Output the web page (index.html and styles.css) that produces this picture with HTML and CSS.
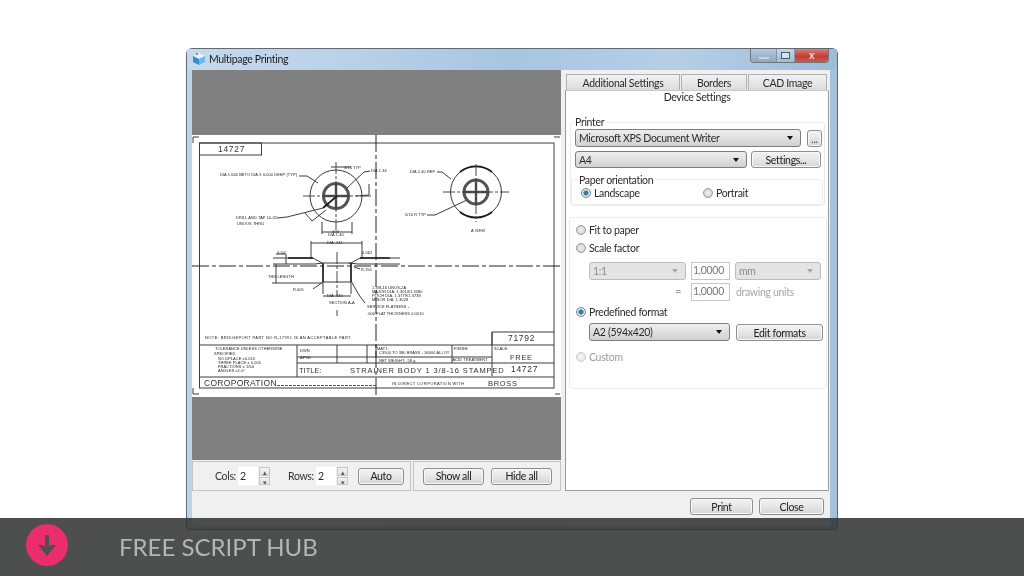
FILE: index.html
```html
<!DOCTYPE html>
<html lang="en">
<head>
<meta charset="utf-8">
<title>Multipage Printing</title>
<link rel="stylesheet" href="styles.css">
</head>
<body>
<main class="window">
  <header class="titlebar">
    <svg class="appicon" viewBox="0 0 14 14"><path d="M1 4l6-3 6 3-6 3z" fill="#e8f4fb"/><path d="M1 4l6 3v6l-6-3z" fill="#2f8fd0"/><path d="M13 4l-6 3v6l6-3z" fill="#6ab9e8"/><path d="M4 1.500l2 1" stroke="#1c5f95" stroke-width="1.200"/></svg>
    <span class="wintitle">Multipage Printing</span>
    <div class="winbtns">
      <span class="wb wb-min"><i></i></span>
      <span class="wb wb-max"><i></i></span>
      <span class="wb wb-close">x</span>
    </div>
  </header>
  <div class="client">
    <section class="leftcol">
      <div class="preview">
        <svg class="paper" viewBox="192 135 369 262">
          <g class="ln">
            <path d="M193 143v-6h6M554 137h6M193 388v6h6M555 394h5"/>
            <rect x="199.500" y="143" width="354.500" height="245"/>
            <rect x="199.500" y="143" width="62" height="12"/>
            <path d="M492 345v-13h62M199.500 345h354.500M199.500 377h354.500M297 345v32M297 357h195M297 363h257M492 332v44M452 345v18M337 345v18M367 345v18M376 345v12"/>
          </g>
          <path class="dash" d="M376 135v262M192 266h369"/>
          <g class="ln">
            <circle cx="336" cy="196" r="26"/>
            <circle class="ring" cx="336" cy="196" r="12.500"/>
            <path class="cross" d="M336 184v24M324 196h24"/>
            <path class="thin" d="M336 162v68M303 196h68"/>
            <path d="M299 176h8l11 7M370 171l-6 1l-17 16M331 167h20M369 184v11l-13 1"/>
            <path class="thick" d="M323 208l14-12"/>
            <path d="M277 218l10 -1l36 -9M305 213l7 8l14-11M322 222v12M352 222v12M322 232h30"/>
            <circle cx="476" cy="192" r="25.500"/>
            <path class="thick" d="M460 172a25.600 25.600 0 0 1 32 0M460 212a25.600 25.600 0 0 0 32 0"/>
            <circle class="ring" cx="476" cy="192" r="12"/>
            <path class="cross" d="M476 181v22M465 192h22"/>
            <path class="thin" d="M476 164v58M443 192h66"/>
            <path d="M437 172h5l9 7M427 215h8l32-15"/>
          </g>
          <g class="ln">
            <path d="M311 243h51M311 241v18M362 241v18M273 258h40l9 5M273 264h42l8 -1M400 258h-40l-9 5M400 264h-42l-9 -1"/>
            <path class="thick" d="M288 258h25M323 263v19M351 263v19M360 258h30"/>
            <path d="M323 263h28M323 282h28M276 264v19M272 283h50M286 254v10M276 254h10M323 282v12M351 282v12M323 296h28M351 281l8 14l6 8M323 282l-10 7M354 267l6 2"/>
            <path class="thin" d="M337 252v44M337 310v6"/>
          </g>
          <g class="tiny">
            <text x="220" y="176">DIA 1.640 BETO DIA X 0.000 DEEP (TYP)</text>
            <text x="236" y="219">DRILL AND TAP 10-32</text>
            <text x="237" y="225">UNOOS THRU</text>
            <text x="344" y="169">3/16 TYP</text>
            <text x="371" y="172">DIA 1.34</text>
            <text x="331" y="233">.000</text>
            <text x="328" y="236">DIA 1.40</text>
            <text x="410" y="173">DIA 2.40 REF</text>
            <text x="405" y="216">5/16 R TYP</text>
            <text x="471" y="232">A VIEW</text>
            <text x="327" y="244">DIA .241</text>
            <text x="277" y="254">4.50°</text>
            <text x="268" y="278">THD LENGTH</text>
            <text x="293" y="291">R.005</text>
            <text x="361" y="271">R.156</text>
            <text x="362" y="254">0.062</text>
            <text x="327" y="297">DIA .140</text>
            <text x="329" y="304">SECTION A-A</text>
            <text x="372" y="289">1.3/8-16 UNOS-2A</text>
            <text x="372" y="293">MAJOR DIA. 1.3014/1.3580</text>
            <text x="372" y="297">PITCH DIA. 1.3779/1.3738</text>
            <text x="372" y="301">MINOR DIA. 1.3028</text>
            <text x="367" y="308">SERVICE FLATNESS -</text>
            <text x="367" y="315">.000 FLAT THICKNESS 0.0010</text>
            <text x="205" y="338.500" class="wide">NOTE: BRIDGEPORT PART NO R-17991 IS AN ACCEPTABLE PART</text>
            <text x="215" y="350">TOLERANCE UNLESS OTHERWISE</text>
            <text x="214" y="355">SPECIFIED</text>
            <text x="218" y="360">NO DPLACE ±0.010</text>
            <text x="218" y="364">THREE PLACE ± 0.005</text>
            <text x="218" y="368">FRACTIONS ± 1/64</text>
            <text x="218" y="372">ANGLES ±1.0°</text>
            <text x="300" y="352">DWN</text>
            <text x="300" y="358.500">APVD</text>
            <text x="377" y="350">MAT'L:</text>
            <text x="379" y="354">C3500 TO 380 BRASS - 36000 ALLOY</text>
            <text x="379" y="362">NET WEIGHT: .58 g</text>
            <text x="454" y="350">FINISH:</text>
            <text x="452.500" y="360.500">ACID TREATMENT</text>
            <text x="494" y="350">SCALE:</text>
            <text x="392" y="385" class="wide">IN DIRECT CORPORATION WITH</text>
          </g>
          <g class="small">
            <text x="218" y="152" class="s8">14727</text>
            <text x="508" y="341" class="s8">71792</text>
            <text x="510" y="360" class="s6">FREE</text>
            <text x="511" y="371.500" class="s8">14727</text>
            <text x="488" y="385.500" class="s7">BROSS</text>
            <text x="299" y="373" class="s7 st">TITLE:</text>
            <text x="350" y="373" class="s7 sl">STRAINER BODY 1 3/8-16 STAMPED</text>
            <text x="204" y="386" class="s8 sc">COROPORATION</text>
          </g>
          <path class="thin-solid" d="M277 385.500h100"/>
        </svg>
      </div>
      <div class="controls">
        <div class="cpanel cp1">
          <label class="lbl lbl-cols">Cols:</label>
          <span class="num">2</span>
          <span class="spin"><i>▴</i><i>▾</i></span>
          <label class="lbl lbl-rows">Rows:</label>
          <span class="num">2</span>
          <span class="spin"><i>▴</i><i>▾</i></span>
          <button class="btn btn-auto">Auto</button>
        </div>
        <div class="cpanel cp2">
          <button class="btn btn-show">Show all</button>
          <button class="btn btn-show">Hide all</button>
        </div>
      </div>
    </section>
    <section class="rightcol">
      <nav class="tabs">
        <span class="tab tab-a">Additional Settings</span>
        <span class="tab tab-b">Borders</span>
        <span class="tab tab-c">CAD Image</span>
      </nav>
      <div class="panel">
        <div class="paneltitle">Device Settings</div>
        <div class="group printer">
          <div class="legend">Printer</div>
          <div class="row r1">
            <div class="combo w226">Microsoft XPS Document Writer</div>
            <button class="btn btn-dots">...</button>
          </div>
          <div class="row r2">
            <div class="combo w172">A4</div>
            <button class="btn btn-settings">Settings...</button>
          </div>
          <div class="group orient">
            <div class="legend lg2">Paper orientation</div>
            <div class="orow">
              <span class="radio on"></span><span class="rl rl-land">Landscape</span>
              <span class="radio"></span><span>Portrait</span>
            </div>
          </div>
        </div>
        <div class="group scale">
          <div class="rrow mt5"><span class="radio"></span><span>Fit to paper</span></div>
          <div class="rrow mt4"><span class="radio"></span><span>Scale factor</span></div>
          <div class="inrow mt7">
            <div class="combo dis w97">1:1</div>
            <div class="field">1,0000</div>
            <div class="combo dis w86">mm</div>
          </div>
          <div class="inrow mt3">
            <div class="eq">=</div>
            <div class="field">1,0000</div>
            <div class="du">drawing units</div>
          </div>
          <div class="rrow mt4"><span class="radio on"></span><span>Predefined format</span></div>
          <div class="inrow mt4">
            <div class="combo w141">A2 (594x420)</div>
            <button class="btn btn-edit">Edit formats</button>
          </div>
          <div class="rrow mt9 off"><span class="radio"></span><span>Custom</span></div>
        </div>
      </div>
      <footer class="foot">
        <button class="btn btn-print">Print</button>
        <button class="btn btn-close">Close</button>
      </footer>
    </section>
  </div>
</main>
<aside class="hub">
  <span class="hubicon">
    <svg viewBox="0 0 42 42"><path d="M21 11v16" fill="none" stroke="#4d4f50" stroke-width="4"/><path d="M12 21h5l4 4 4-4h5l-9 11z" fill="#4d4f50"/></svg>
  </span>
  <span class="hubtext">FREE SCRIPT HUB</span>
</aside>
</body>
</html>
```

FILE: styles.css
```css
* { box-sizing: border-box; }
html, body { margin: 0; height: 100%; }
body {
  width: 1024px;
  height: 576px;
  overflow: hidden;
  background: #fff;
  padding: 48px 0 0 186px;
  font-family: Lato, "Liberation Sans", sans-serif;
  font-size: 10.500px;
  color: #2b2b2b;
}

.window {
  width: 652px;
  height: 482px;
  border: 1px solid #5f6a72;
  border-radius: 6px 6px 3px 3px;
  background: linear-gradient(90deg, #bcd3e9 0, #a9c6e2 45%, #b3cde6 70%, #a5c2dd 100%);
  display: flex;
  flex-direction: column;
  filter: blur(0.4px);
  letter-spacing: -0.320px;
}

.titlebar { height: 21px; display: flex; align-items: flex-start; position: relative; background: linear-gradient(90deg, #c6d9ec 0, #b9d1e8 25%, #a7c5e1 50%, #b6cfe7 75%, #9dbcd8 100%); }
.appicon { width: 14px; height: 14px; margin: 3px 0 0 5px; }
.wintitle { margin: 3px 0 0 3px; line-height: 14px; color: #1c1c1c; }
.winbtns { margin-left: auto; margin-right: 8px; display: flex; height: 14px; border: 1px solid #6d7780; border-top: 0; border-radius: 0 0 4px 4px; overflow: hidden; }
.wb { display: flex; align-items: center; justify-content: center; height: 13px; }
.wb-min { width: 25px; background: linear-gradient(#b5c9dc, #8ea9c0); }
.wb-min i { width: 10px; height: 2px; margin-top: 5px; background: #c5d4e0; }
.wb-max { width: 19px; background: linear-gradient(#c4d5e5, #a4bcd2); border-left: 1px solid #8497a8; border-right: 1px solid #8497a8; }
.wb-max i { width: 9px; height: 7px; border: 1px solid #4b5a68; background: #d6e2ec; }
.wb-close { width: 33px; background: linear-gradient(#d9807a, #c33e34 55%, #cb5a50); color: #eddcdc; font: bold 10px/11px "Liberation Sans", sans-serif; }

.client { flex: 1; margin: 0 7px 3px 5px; background: #f0f0f0; display: flex; }
.leftcol { width: 369px; }
.preview { height: 390px; background: #808080; display: flex; align-items: center; }
.paper { width: 369px; height: 262px; background: #fff; display: block; margin-top: 1px; }

.ln { fill: none; stroke: #3c3c3c; stroke-width: 1; }
.ln .thick { stroke: #1a1a1a; stroke-width: 1.700; }
.ln .ring { stroke: #555; stroke-width: 3; }
.ln .cross { stroke: #555; stroke-width: 2.400; }
.ln .thin { stroke: #333; stroke-width: 0.900; stroke-dasharray: 12 2 3 2; }
.dash { fill: none; stroke: #222; stroke-width: 1; stroke-dasharray: 17 3 4 3; }
.thin-solid { fill: none; stroke: #555; stroke-width: 1; stroke-dasharray: 3 1; }
.tiny text { font-family: "Liberation Sans", sans-serif; font-size: 3.900px; fill: #222; letter-spacing: 0.100px; }
.tiny .wide { letter-spacing: 0.400px; font-size: 4px; }
.small text { font-family: "Liberation Sans", sans-serif; fill: #333; letter-spacing: 0.700px; }
.s8 { font-size: 8.500px; }
.s7 { font-size: 7.500px; }
.s6 { font-size: 7.500px; }
.small .sl { letter-spacing: 0.870px; }
.small .st { letter-spacing: 0; }
.small .sc { letter-spacing: 0.300px; }

.controls { display: flex; margin-top: 1px; height: 30px; gap: 2px; }
.cpanel { border: 1px solid #c4c4c4; display: flex; align-items: center; height: 30px; }
.cp1 { width: 219px; padding-left: 22px; }
.cp2 { width: 148px; padding-left: 9px; gap: 7px; }
.lbl { color: #333; }
.lbl-cols { width: 23px; }
.lbl-rows { width: 28px; margin-left: 18px; }
.num { width: 20px; height: 18px; background: #fff; padding-left: 2px; line-height: 18px; }
.spin { width: 12px; height: 18px; display: flex; flex-direction: column; gap: 1px; padding: 0 0 0 1px; }
.spin i { flex: 1; font-style: normal; font-size: 7px; line-height: 8px; text-align: center; color: #556; background: linear-gradient(#f4f4f4, #dde0e5); border: 1px solid #c4c6ca; overflow: hidden; }

.btn {
  font: inherit;
  letter-spacing: inherit;
  color: #222;
  padding: 0;
  height: 17px;
  line-height: 14px;
  border: 1px solid #8e8e8e;
  border-radius: 3px;
  background: linear-gradient(#f3f3f3, #e6e6e6 50%, #d5d5d5);
  box-shadow: inset 0 0 0 1px #f8f8f8;
}
.btn-auto { width: 46px; margin-left: 10px; }
.btn-show { width: 61px; }
.btn-dots { width: 15px; margin-left: 6px; margin-top: 1px; color: #555; }
.btn-settings { width: 70px; margin-left: 4px; }
.btn-edit { width: 87px; margin-left: 6px; margin-top: 1px; }
.btn-print { width: 63px; }
.btn-close { width: 65px; margin-left: 6px; }

.rightcol { width: 264px; margin-left: 4px; padding-top: 4px; }
.tabs { display: flex; height: 16px; padding-left: 1px; gap: 1px; }
.tab { border: 1px solid #b0b0b0; border-bottom: 0; background: linear-gradient(#f2f2f2, #dcdcdc); text-align: center; line-height: 17px; }
.tab-a { width: 114px; }
.tab-b { width: 66px; }
.tab-c { width: 79px; }
.panel { height: 401px; background: #fff; border: 1px solid #9a9a9a; border-top-color: #c9c9c9; }
.paneltitle { height: 14px; line-height: 13px; text-align: center; }
.group { border: 1px solid #ececec; border-radius: 3px; }
.printer { height: 84px; margin: 17px 3px 0 4px; }
.legend { height: 12px; line-height: 12px; margin: -7px 0 0 3px; background: #fff; width: max-content; padding: 0 1px; }
.row { display: flex; margin-left: 4px; }
.r1 { margin-top: 1px; }
.r2 { margin-top: 4px; }
.combo {
  height: 18px;
  line-height: 17px;
  padding-left: 3px;
  border: 1px solid #7d7d7d;
  border-radius: 3px;
  background: linear-gradient(#eeeeee, #e0e0e0 50%, #d0d0d0);
  position: relative;
}
.combo::after {
  content: "";
  position: absolute;
  right: 7px;
  top: 6px;
  border: 3px solid transparent;
  border-top: 4px solid #111;
  border-bottom: 0;
}
.w226 { width: 226px; }
.w172 { width: 172px; height: 17px; }
.w141 { width: 141px; }
.w97 { width: 97px; }
.w86 { width: 86px; }
.combo.dis { border-color: #bcbcbc; background: #e4e4e4; color: #8a8a8a; }
.combo.dis::after { border-top-color: #a8a8a8; }

.orient { height: 26px; margin: 11px 1px 0 0; }
.lg2 { margin: -6px 0 0 6px; }
.orow { display: flex; align-items: center; height: 14px; margin: 0 0 0 9px; gap: 3px; }
.rl-land { width: 106px; }
.radio {
  width: 10px;
  height: 10px;
  border-radius: 50%;
  border: 1px solid #9a9a9a;
  background: radial-gradient(#f2f2f2, #c8c8c8);
  flex: none;
}
.radio.on { background: radial-gradient(#2c7f9f 0 35%, #e8eef2 55%); border-color: #6f7f8c; }

.scale { height: 172px; margin: 11px 1px 0 3px; padding-left: 6px; }
.rrow { display: flex; align-items: center; gap: 3px; height: 14px; }
.rrow.off { color: #9a9a9a; }
.rrow.off .radio { opacity: .55; }
.mt3 { margin-top: 3px; }
.mt4 { margin-top: 4px; }
.mt5 { margin-top: 5px; }
.mt7 { margin-top: 7px; }
.mt9 { margin-top: 9px; }
.inrow { display: flex; margin-left: 13px; height: 18px; }
.field { width: 39px; height: 18px; margin: 0 5px; border: 1px solid #c6c6c6; color: #777; line-height: 15px; padding-left: 1px; background: #fff; }
.eq { width: 97px; text-align: right; padding-right: 5px; color: #999; line-height: 16px; }
.du { color: #a6a6a6; line-height: 18px; margin-left: 1px; }

.foot { display: flex; justify-content: flex-end; margin-top: 7px; padding-right: 5px; }

.hub {
  position: fixed;
  left: 0;
  right: 0;
  top: 518px;
  height: 58px;
  background: rgba(48, 50, 49, .86);
  display: flex;
  align-items: center;
}
.hubicon { width: 42px; height: 42px; border-radius: 50%; background: #ea2e6d; margin: -4px 0 0 26px; display: block; }
.hubicon svg { display: block; width: 42px; height: 42px; }
.hubtext { margin-left: 51px; font: 400 24px/30px Lato, "Liberation Sans", sans-serif; color: #b4b5b5; }
```
